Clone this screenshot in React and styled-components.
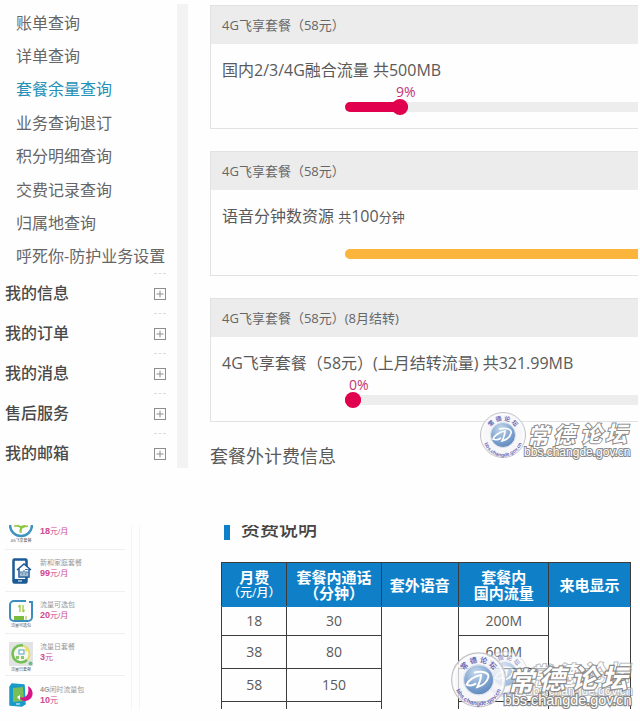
import React from 'react';
import styled, { createGlobalStyle } from 'styled-components';

const queries = [
  '账单查询',
  '详单查询',
  '套餐余量查询',
  '业务查询退订',
  '积分明细查询',
  '交费记录查询',
  '归属地查询',
  '呼死你-防护业务设置',
];

const groups = ['我的信息', '我的订单', '我的消息', '售后服务', '我的邮箱'];

const App = () => {
  return (
    <>
      <GlobalStyle />
      <Page>
        <Account>
          <Sidebar>
            <QueryList>
              {queries.map((name) => (
                <li key={name}>
                  <QueryLink href="#" $active={name === '套餐余量查询'}>{name}</QueryLink>
                </li>
              ))}
            </QueryList>
            {groups.map((name) => (
              <Group key={name}>
                <GroupName>{name}</GroupName>
                <Expand type="button" aria-label={`展开${name}`}>
                  <svg width="12" height="12" viewBox="0 0 12 12" fill="none" stroke="#8c8c8c">
                    <rect x="0.5" y="0.5" width="11" height="11" />
                    <path d="M6 2.500v7M2.500 6h7" />
                  </svg>
                </Expand>
              </Group>
            ))}
          </Sidebar>

          <Usage>
            <Card>
              <CardHead>4G飞享套餐（58元）</CardHead>
              <CardBody>
                <Resource>国内2/3/4G融合流量 共500MB</Resource>
                <Meter label="国内流量" value={9} />
              </CardBody>
            </Card>
            <Card>
              <CardHead>4G飞享套餐（58元）</CardHead>
              <CardBody>
                <Resource>语音分钟数资源 <small>共</small>100<small>分钟</small></Resource>
                <Meter label="语音分钟数" value={100} full />
              </CardBody>
            </Card>
            <Card>
              <CardHead>4G飞享套餐（58元）(8月结转)</CardHead>
              <CardBody>
                <Resource>4G飞享套餐（58元）(上月结转流量) 共321.99MB</Resource>
                <Meter label="结转流量" value={0} />
              </CardBody>
            </Card>
            <Extra>套餐外计费信息</Extra>
          </Usage>
          <UpperMark><Watermark id="upper" width={150} /></UpperMark>
        </Account>

        <Plans>
          <ProductList>
            <Product>
              <FlyIcon />
              <Info><Price><b>18</b>元/月</Price></Info>
            </Product>
            <Product>
              <HomeIcon />
              <Info><span>新和家庭套餐</span><Price><b>99</b>元/月</Price></Info>
            </Product>
            <Product>
              <PackIcon />
              <Info><span>流量可选包</span><Price><b>20</b>元/月</Price></Info>
            </Product>
            <Product>
              <DayIcon />
              <Info><span>流量日套餐</span><Price><b>3</b>元</Price></Info>
            </Product>
            <Product>
              <IdleIcon />
              <Info><span><b>4G</b>闲时流量包</span><Price><b>10</b>元</Price></Info>
            </Product>
          </ProductList>
          <Divider />

          <Tariff>
            <TariffTitle>资费说明</TariffTitle>
            <Table>
              <colgroup>
                <col style={{ width: '16%' }} />
                <col style={{ width: '23%' }} />
                <col style={{ width: '19%' }} />
                <col style={{ width: '22%' }} />
                <col style={{ width: '20%' }} />
              </colgroup>
              <thead>
                <tr>
                  <th>月费<small>（元/月）</small></th>
                  <th>套餐内通话<br />（分钟）</th>
                  <th>套外语音</th>
                  <th>套餐内<br />国内流量</th>
                  <th>来电显示</th>
                </tr>
              </thead>
              <tbody>
                <tr>
                  <td>18</td>
                  <td>30</td>
                  <td rowSpan={4} />
                  <td>200M</td>
                  <td rowSpan={4} />
                </tr>
                <tr><td>38</td><td>80</td><td>600M</td></tr>
                <tr><td>58</td><td>150</td><td /></tr>
                <tr><td /><td /><td /></tr>
              </tbody>
            </Table>
          </Tariff>
          <FaintMark><Watermark id="faint" width={150} /></FaintMark>
          <LowerMark><Watermark id="lower" width={180} /></LowerMark>
        </Plans>
      </Page>
    </>
  );
};

export default App;

const Meter = ({ label, value, full }) => (
  <MeterWrap>
    <Track
      role="progressbar"
      aria-label={label}
      aria-valuenow={value}
      aria-valuemin={0}
      aria-valuemax={100}
    >
      <Fill $full={full} style={{ width: `${value}%` }}>
        {!full && <Knob><Percent>{value}%</Percent></Knob>}
      </Fill>
    </Track>
  </MeterWrap>
);

const Watermark = ({ id, width }) => (
  <svg width={width} height={width / 3} viewBox="0 0 150 50" overflow="visible">
    <defs>
      <radialGradient id={`${id}-ball`} cx="0.4" cy="0.25" r="0.8">
        <stop offset="0" stopColor="#c5d8ec" />
        <stop offset="0.6" stopColor="#7ea3ce" />
        <stop offset="1" stopColor="#5c86bb" />
      </radialGradient>
      <path id={`${id}-top`} d="M8.500 24a14.500 14.500 0 0 1 29 0" />
      <path id={`${id}-bottom`} d="M3.500 21a20 20 0 1 0 39 0" />
    </defs>
    <circle cx="23" cy="24" r="22.500" fill="#f4f4f8" fillOpacity="0.75" stroke="#c4c4c8" />
    <circle cx="23" cy="24" r="20.500" fill="none" stroke="#fff" />
    <circle cx="23" cy="24" r="12.500" fill={`url(#${id}-ball)`} stroke="#dde4ee" />
    <path
      d="M19 18c9-2 13 1 12 4-1 4-5 7-9 8 2-4 3-7 3-10-6 1-11 5-12 8 2 1 5 1 8-1"
      fill="none"
      stroke="#fff"
      strokeWidth="1.600"
    />
    <StampText fontSize="6">
      <textPath href={`#${id}-top`} startOffset="50%" textAnchor="middle">常 德 论 坛</textPath>
    </StampText>
    <StampText fontSize="5">
      <textPath href={`#${id}-bottom`} startOffset="50%" textAnchor="middle">bbs.changde.gov.cn</textPath>
    </StampText>
    <BrushText x="47 73 100 125" y="33 32 31 31" fontSize="22">常德论坛</BrushText>
    <UrlText x="44" y="45" fontSize="12">bbs.changde.gov.cn</UrlText>
  </svg>
);

const FlyIcon = () => (
  <Icon viewBox="0 0 24 32">
    <path d="M1 10a11 11 0 0 0 22 0" fill="none" stroke="#3f93bd" strokeWidth="2.500" />
    <path d="M6 9l5 4-1 5 3-4 5-5-6 2z" fill="#8cc63f" />
    <path d="M5 11h5M14 12l5-1M12 13v5" stroke="#8cc63f" strokeWidth="1.500" />
    <Caption x="12" y="27">4G飞享套餐</Caption>
  </Icon>
);

const HomeIcon = () => (
  <Icon viewBox="0 0 24 32">
    <rect x="4.500" y="2.500" width="13" height="23" rx="1" fill="#fff" stroke="#1b5a94" strokeWidth="2.500" />
    <path d="M4 22h14v4H4z" fill="#1b5a94" />
    <path d="M9 24h4" stroke="#fff" />
    <path d="M8 13l7-6 7 6M10 12v8h10v-8" fill="#fff" stroke="#1b5a94" strokeWidth="1.500" />
    <path d="M11 18v-3h2v3M14 18v-4h2v4M17 18v-3h2v3M10 19h10" fill="none" stroke="#4779a8" />
  </Icon>
);

const PackIcon = () => (
  <Icon viewBox="0 0 24 32">
    <path
      d="M17 2H5a4 4 0 0 0-4 4v12a4 4 0 0 0 4 4h14a4 4 0 0 0 4-4V3h-3"
      fill="none"
      stroke="#3c8fbd"
      strokeWidth="2"
    />
    <path d="M11 6v7M9.500 8L11 6M14 6v7M14 13l1.500-2" fill="none" stroke="#9bcb3c" strokeWidth="1.300" />
    <path d="M5 17h10v4H5z" fill="#7cbc3c" />
    <path d="M16 17h2v4h-2z" fill="#c6e29a" />
    <Caption x="12" y="28">流量可选包</Caption>
  </Icon>
);

const DayIcon = () => (
  <Icon viewBox="0 0 24 32">
    <path d="M0 1h24v24H0z" fill="#e2e4e4" />
    <circle cx="12" cy="13" r="8.500" fill="#f5f7ee" stroke="#e7dc68" strokeWidth="2" />
    <path d="M14 4.500A8.500 8.500 0 1 0 18 19" fill="none" stroke="#72bf57" strokeWidth="2.500" />
    <rect x="10" y="9" width="5" height="4" fill="#fff" stroke="#4fa5c4" />
    <path d="M7 15h3v3H7zM12 15h3v3h-3z" fill="#86c86b" />
    <circle cx="17" cy="9" r="1.500" fill="#f1df69" />
    <circle cx="21.500" cy="22.500" r="2" fill="#71b98a" />
    <Caption x="12" y="30">流量日套餐</Caption>
  </Icon>
);

const IdleIcon = () => (
  <Icon viewBox="0 0 24 32">
    <path d="M3 1l12 1 1 19-3 2-12-1L1 4z" fill="#199bc9" stroke="#199bc9" strokeWidth="1.500" strokeLinejoin="round" />
    <path d="M4 5l10-1 1 14-11 1z" fill="#79be57" />
    <path d="M7 21h4" stroke="#fff" />
    <path d="M19 3c7 4 6 14-3 15-3 0-5-2-6-4 5 2 11-1 9-11z" fill="#d9148a" />
    <path d="M11 12l-3 2 3 3z" fill="#fff" />
  </Icon>
);

const GlobalStyle = createGlobalStyle`
  * {
    box-sizing: border-box;
  }

  body {
    margin: 0;
    background: #fefefe;
    color: #5a5a5a;
    font-family: 'Open Sans', 'Noto Sans CJK SC', sans-serif;
  }
`;

const Page = styled.main`
  display: flex;
  flex-direction: column;
  gap: 57px;
  height: 100vh;
  padding: 4px 2px 12px 0;
  overflow: hidden;
`;

const Account = styled.section`
  position: relative;
  display: flex;
  flex-shrink: 0;
  gap: 22px;
`;

const Sidebar = styled.nav`
  flex: 0 0 188px;
  padding: 2px 11px 0 5px;
  border-right: 11px solid #f3f3f3;
`;

const QueryList = styled.ul`
  display: grid;
  grid-auto-rows: 1fr;
  align-items: center;
  min-height: 267px;
  margin: 0;
  padding: 0 0 0 11px;
  list-style: none;
`;

const QueryLink = styled.a`
  display: block;
  color: ${({ $active }) => ($active ? '#2590b8' : '#666')};
  font-size: 16px;
  line-height: 32px;
  text-decoration: none;
  white-space: nowrap;
`;

const Group = styled.div`
  display: flex;
  justify-content: space-between;
  height: 40px;

  &:last-child {
    height: 30px;
  }
`;

const GroupName = styled.span`
  color: #4a4a4a;
  font-size: 16px;
  font-weight: 500;
  line-height: 40px;
`;

const Expand = styled.button`
  height: 40px;
  padding: 0;
  border: 0;
  border-top: 1px dashed #ddd;
  background: none;

  svg {
    display: block;
  }
`;

const Usage = styled.div`
  flex: 1;
  min-width: 0;
`;

const Card = styled.article`
  margin: 1px 0 22px;
  border: 1px solid #e2e2e2;
  border-right: 0;
  overflow: hidden;
`;

const CardHead = styled.header`
  padding-left: 11px;
  background: #ececec;
  color: #666;
  font-size: 13px;
  line-height: 38px;
  white-space: nowrap;
`;

const CardBody = styled.div`
  padding: 12px 0 16px 11px;
`;

const Resource = styled.div`
  font-size: 16px;
  line-height: 28px;
  white-space: nowrap;

  small {
    font-size: 13px;
  }
`;

const MeterWrap = styled.div`
  padding: 18px 0 0 123px;
`;

const Track = styled.div`
  width: 700px;
  height: 10px;
  border-radius: 5px;
  background: #ededed;
`;

const Fill = styled.div`
  position: relative;
  min-width: 16px;
  height: 10px;
  border-radius: 5px;
  background: ${({ $full }) => ($full ? '#fbb43c' : '#e0004d')};
`;

const Knob = styled.span`
  position: absolute;
  top: -3px;
  right: 0;
  width: 16px;
  height: 16px;
  border-radius: 50%;
  background: #e0004d;
`;

const Percent = styled.span`
  position: absolute;
  bottom: 14px;
  left: 4px;
  color: #c43572;
  font-size: 14px;
  line-height: 18px;
`;

const Extra = styled.h2`
  margin: 0;
  font-size: 18px;
  font-weight: 400;
  line-height: 24px;
`;

const UpperMark = styled.div`
  position: absolute;
  right: 8px;
  bottom: 2px;
`;

const Plans = styled.section`
  position: relative;
  display: flex;
  flex: 1;
  min-height: 0;
  overflow: hidden;
`;

const ProductList = styled.ul`
  flex: 0 0 132px;
  margin: -17px 0 0;
  padding: 0 6px 0 5px;
  border-right: 1px solid #f4f4f4;
  list-style: none;
`;

const Product = styled.li`
  display: flex;
  gap: 7px;
  height: 42px;
  padding-left: 4px;
  border-bottom: 1px solid #efefef;

  &:last-child {
    border-bottom: 0;
  }
`;

const Icon = styled.svg`
  flex-shrink: 0;
  width: 24px;
  height: 32px;
  margin-top: 7px;
`;

const Caption = styled.text`
  fill: #555;
  font-size: 4px;
  text-anchor: middle;
`;

const Info = styled.div`
  display: flex;
  flex-direction: column;
  justify-content: flex-end;
  padding-bottom: 12px;
  color: #999;
  font-family: 'Liberation Sans', 'Noto Sans CJK SC', sans-serif;
  font-size: 7px;
  line-height: 11px;
`;

const Price = styled.span`
  color: #cf4a92;
  font-size: 8px;

  b {
    font-size: 9px;
  }
`;

const Divider = styled.div`
  width: 8px;
  border-right: 1px solid #f4f4f4;
`;

const Tariff = styled.div`
  flex: 1;
  margin-top: -10px;
  padding: 0 7px 0 81px;
`;

const TariffTitle = styled.h2`
  display: flex;
  gap: 11px;
  margin: 0 0 19px;
  padding-left: 3px;
  color: #444;
  font-size: 19px;
  font-weight: 500;
  line-height: 28px;

  &::before {
    content: '';
    width: 6px;
    height: 25px;
    background: #0f7fc8;
  }
`;

const Table = styled.table`
  width: 100%;
  border-collapse: collapse;
  table-layout: fixed;
  text-align: center;

  th,
  td {
    padding: 0;
    border: 1px solid #3c3c3c;
  }

  th {
    height: 44px;
    border-bottom-color: #0f7fc8;
    background: #0f7fc8;
    color: #fff;
    font-size: 15px;
    font-weight: 700;
    line-height: 16px;
    white-space: nowrap;
  }

  small {
    display: block;
    font-size: 12px;
    font-weight: 500;
  }

  td {
    height: 33px;
    font-size: 14px;
    line-height: 20px;
  }

  tbody tr:first-child td {
    height: 29px;
  }
`;

const FaintMark = styled.div`
  position: absolute;
  right: 6px;
  bottom: 4px;
  opacity: 0.6;
`;

const LowerMark = styled.div`
  position: absolute;
  right: 7px;
  bottom: -7px;
`;

const StampText = styled.text`
  fill: #6668b4;
  font-family: 'Liberation Sans', 'Noto Sans CJK SC', sans-serif;
  font-weight: 700;
`;

const BrushText = styled.text`
  fill: #fff;
  stroke: #8a8a8a;
  stroke-width: 2px;
  paint-order: stroke;
  font-family: 'Noto Sans CJK SC', sans-serif;
  font-style: italic;
  font-weight: 700;
`;

const UrlText = styled.text`
  fill: #fff;
  stroke: #8a8a8a;
  stroke-width: 2px;
  paint-order: stroke;
  font-family: 'Liberation Sans', sans-serif;
`;
